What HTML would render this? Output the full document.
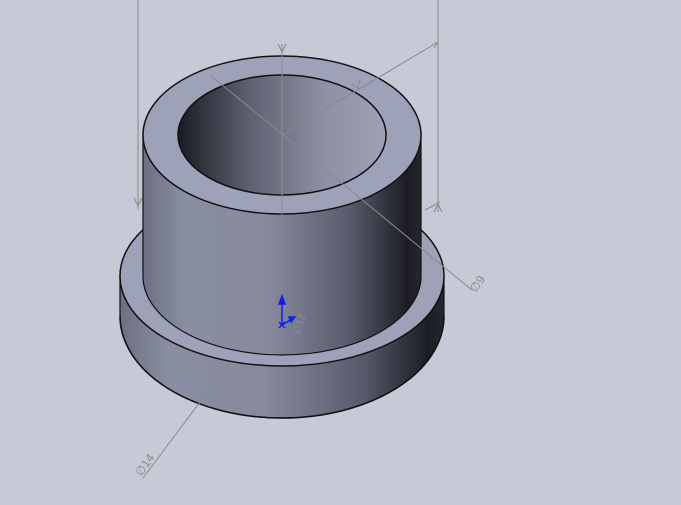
<!DOCTYPE html>
<html><head><style>
html,body{margin:0;padding:0;background:#c6cad6;width:681px;height:505px;overflow:hidden}
</style></head><body>
<svg width="681" height="505" viewBox="0 0 681 505" xmlns="http://www.w3.org/2000/svg">
<defs>
<linearGradient id="side" x1="0" x2="1" y1="0" y2="0">
<stop offset="0" stop-color="#6c7082"/><stop offset="0.15" stop-color="#8a8ea2"/><stop offset="0.45" stop-color="#868a9c"/><stop offset="0.75" stop-color="#565a6a"/><stop offset="0.95" stop-color="#1c1d24"/><stop offset="1" stop-color="#25262e"/>
</linearGradient>
<linearGradient id="hole" x1="0" x2="1" y1="0" y2="0">
<stop offset="0" stop-color="#1a1b22"/><stop offset="0.35" stop-color="#5e6272"/><stop offset="0.7" stop-color="#8c90a2"/><stop offset="1" stop-color="#9ea2b4"/>
</linearGradient>
</defs>
<!-- flange -->
<path d="M120 276 L120 316 A162 102 0 0 0 444 316 L444 276 Z" fill="url(#side)" stroke="#111" stroke-width="1.2"/>
<path d="M120 316 A162 102 0 0 0 444 316" fill="none" stroke="#111" stroke-width="1.5"/>
<ellipse cx="282" cy="276" rx="162" ry="90" fill="#9ea2b8" stroke="#111" stroke-width="1.5"/>
<!-- main cylinder -->
<path d="M143 135 L143 276 A139 79 0 0 0 421 276 L421 135 Z" fill="url(#side)" stroke="#111" stroke-width="1.2"/>
<ellipse cx="282" cy="135" rx="139" ry="79" fill="#9ea2b8" stroke="#111" stroke-width="1.5"/>
<ellipse cx="282" cy="135" rx="104" ry="60" fill="url(#hole)" stroke="#111" stroke-width="1.5"/>
<!-- dimension lines -->
<g stroke="#8a8a8a" stroke-width="1" fill="none">
<line x1="138" y1="0" x2="138" y2="210"/>
<line x1="438" y1="0" x2="438" y2="212"/>
<line x1="282" y1="44" x2="282" y2="330"/>
<line x1="210" y1="75" x2="472" y2="290"/>
<line x1="282" y1="135" x2="438" y2="42"/>
<line x1="143" y1="478" x2="230" y2="362"/>
<line x1="425" y1="210" x2="440" y2="202"/>
<path d="M278 44 L282 52 L286 44"/>
<path d="M134 198 L138 206 L142 198"/>
<path d="M434 48 L438 42 L438 48"/>
<path d="M434 212 L438 204 L442 212"/>
<path d="M357 90 L360 80 M352 84 L360 90"/>
<path d="M220 370 L228 365 L224 374"/>
</g>
<text x="470" y="290" font-family="Liberation Sans,sans-serif" font-size="12" fill="#8a8a8a" transform="rotate(-55 476 286)">∅9</text>
<text x="135" y="475" font-family="Liberation Sans,sans-serif" font-size="12" fill="#8a8a8a" transform="rotate(-55 140 470)">∅14</text>
<text x="290" y="333" font-family="Liberation Sans,sans-serif" font-size="11" fill="#8a8a98" transform="rotate(-70 296 328)">∅12</text>
<!-- triad -->
<g stroke="#1020e0" stroke-width="1.5" fill="#1020e0">
<line x1="282" y1="325" x2="282" y2="302"/>
<path d="M279 304 L282 296 L285 304 Z"/>
<line x1="282" y1="325" x2="292" y2="319"/>
<path d="M289 317 L295 317 L291 322Z"/>
<path d="M279 322 L285 328 M285 322 L279 328"/>
</g>
</svg>
</body></html>
